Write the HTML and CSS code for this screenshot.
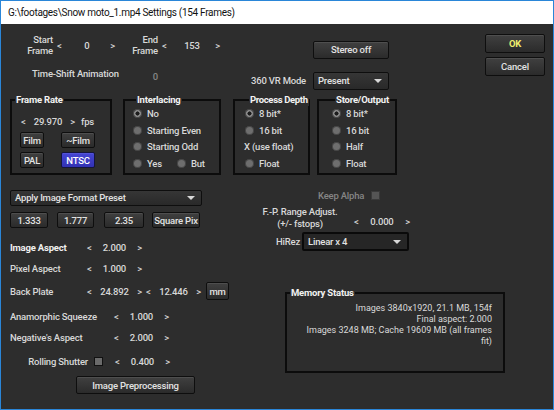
FILE: index.html
```html
<!DOCTYPE html>
<html lang="en">
<head>
    <meta charset="UTF-8">
    <title>Snow moto_1.mp4 Settings</title>
    <link rel="stylesheet" href="styles.css">
</head>
<body>
<div class="win">
    <div class="titlebar">G:\footages\Snow moto_1.mp4 Settings (154 Frames)</div>
    <div class="content">

        <!-- frame range, stereo, ok/cancel -->
        <div class="top">
            <div class="frames">
                <div class="frame-row">
                    <div class="lbl2">Start<br>Frame</div>
                    <div class="spin w-frame"><span>&lt;</span><span>0</span><span>&gt;</span></div>
                    <div class="lbl2">End<br>Frame</div>
                    <div class="spin w-frame"><span>&lt;</span><span>153</span><span>&gt;</span></div>
                </div>
                <div class="timeshift">
                    <span>Time-Shift Animation</span>
                    <span class="dim shift-val">0</span>
                </div>
            </div>
            <div class="vr">
                <span></span>
                <button class="btn">Stereo off</button>
                <span class="vr-lbl">360 VR Mode</span>
                <div class="drop">Present</div>
            </div>
            <div class="actions">
                <button class="btn ok">OK</button>
                <button class="btn">Cancel</button>
            </div>
        </div>

        <!-- group boxes -->
        <div class="groups">
            <fieldset class="grp grp-rate">
                <legend>Frame Rate</legend>
                <div class="fps-row">
                    <div class="spin w-fps"><span>&lt;</span><span>29.970</span><span>&gt;</span></div>
                    <span class="fps">fps</span>
                </div>
                <div class="rate-btns">
                    <button class="btn">Film</button>
                    <button class="btn">~Film</button>
                    <button class="btn">PAL</button>
                    <button class="btn ntsc">NTSC</button>
                </div>
            </fieldset>
            <fieldset class="grp grp-inter">
                <legend>Interlacing</legend>
                <div class="opt"><i class="radio on"></i>No</div>
                <div class="opt"><i class="radio"></i>Starting Even</div>
                <div class="opt"><i class="radio"></i>Starting Odd</div>
                <div class="opt"><i class="radio"></i>Yes<i class="radio but"></i>But</div>
            </fieldset>
            <fieldset class="grp grp-depth">
                <legend>Process Depth</legend>
                <div class="opt"><i class="radio on"></i>8 bit*</div>
                <div class="opt"><i class="radio"></i>16 bit</div>
                <div class="opt plain">X (use float)</div>
                <div class="opt"><i class="radio"></i>Float</div>
            </fieldset>
            <fieldset class="grp grp-store">
                <legend>Store/Output</legend>
                <div class="opt"><i class="radio on"></i>8 bit*</div>
                <div class="opt"><i class="radio"></i>16 bit</div>
                <div class="opt"><i class="radio"></i>Half</div>
                <div class="opt"><i class="radio"></i>Float</div>
            </fieldset>
        </div>

        <!-- aspect settings and memory -->
        <div class="lower">
            <div class="aspect">
                <div class="drop preset">Apply Image Format Preset</div>
                <div class="preset-btns">
                    <button class="btn p1">1.333</button>
                    <button class="btn p2">1.777</button>
                    <button class="btn p3">2.35</button>
                    <button class="btn p4">Square Pix</button>
                </div>
                <div class="param r-image">
                    <span class="plbl strong">Image Aspect</span>
                    <div class="spin w-asp"><span>&lt;</span><span>2.000</span><span>&gt;</span></div>
                </div>
                <div class="param r-pixel">
                    <span class="plbl">Pixel Aspect</span>
                    <div class="spin w-asp"><span>&lt;</span><span>1.000</span><span>&gt;</span></div>
                </div>
                <div class="param r-back">
                    <span class="plbl">Back Plate</span>
                    <div class="spin w-asp"><span>&lt;</span><span>24.892</span><span>&gt;</span></div>
                    <div class="spin w-asp2"><span>&lt;</span><span>12.446</span><span>&gt;</span></div>
                    <button class="btn mm">mm</button>
                </div>
                <div class="param r-anam">
                    <span class="plbl wide">Anamorphic Squeeze</span>
                    <div class="spin w-asp"><span>&lt;</span><span>1.000</span><span>&gt;</span></div>
                </div>
                <div class="param r-neg">
                    <span class="plbl wide">Negative's Aspect</span>
                    <div class="spin w-asp"><span>&lt;</span><span>2.000</span><span>&gt;</span></div>
                </div>
                <div class="param r-roll">
                    <span class="plbl roll">Rolling Shutter</span>
                    <i class="check"></i>
                    <div class="spin w-asp roll-spin"><span>&lt;</span><span>0.400</span><span>&gt;</span></div>
                </div>
                <button class="btn prep">Image Preprocessing</button>
            </div>

            <div class="side">
                <div class="alpha"><span class="dim">Keep Alpha</span><i class="check off"></i></div>
                <div class="fp-row">
                    <div class="fp-lbl">F.-P. Range Adjust.<br>(+/- fstops)</div>
                    <div class="spin w-fp"><span>&lt;</span><span>0.000</span><span>&gt;</span></div>
                </div>
                <div class="hirez">
                    <span class="hirez-lbl">HiRez</span>
                    <div class="drop dark">Linear x 4</div>
                </div>
                <fieldset class="grp memory">
                    <legend>Memory Status</legend>
                    <p>Images 3840x1920, 21.1 MB, 154f<br>
                    Final aspect: 2.000<br>
                    Images 3248 MB; Cache 19609 MB (all frames<br>
                    fit)</p>
                </fieldset>
            </div>
        </div>
    </div>
</div>
</body>
</html>
```

FILE: styles.css
```css
/* dialog window */
body {
    margin: 0;
    background: #2d2d2d;
}

.win {
    width: 554px;
    height: 410px;
    box-sizing: border-box;
    border: 1px solid #2a86d8;
    background: #2d2d2d;
    font-family: Roboto, "Liberation Sans", sans-serif;
    font-size: 9.5px;
    font-weight: 500;
    letter-spacing: -0.2px;
    color: #d8d8d8;
    overflow: hidden;
}

.titlebar {
    height: 23px;
    line-height: 23px;
    padding-left: 7px;
    background: #ffffff;
    color: #111;
    font-family: Roboto, "Liberation Sans", sans-serif;
    font-size: 10px;
    font-weight: 400;
    letter-spacing: -0.3px;
}

.content {
    padding: 10px 8px 0 9px;
}

/* shared controls */
.btn {
    display: block;
    margin: 0;
    padding: 0;
    box-sizing: border-box;
    height: 16px;
    border: 1px solid #0e0e0e;
    border-radius: 2px;
    background: linear-gradient(#404040, #2b2b2b);
    box-shadow: inset 0 1px 0 rgba(255, 255, 255, 0.08);
    color: #e2e2e2;
    font: inherit;
    letter-spacing: inherit;
}

.btn.ok {
    color: #eeee6e;
    font-weight: 700;
}

.btn.ntsc {
    background: linear-gradient(#4646d4, #3232b4);
    border-color: #15153d;
    color: #fff;
}

.drop {
    position: relative;
    box-sizing: border-box;
    height: 18px;
    line-height: 16px;
    padding-left: 4px;
    border: 1px solid #0e0e0e;
    border-radius: 2px;
    background: linear-gradient(#363636, #292929);
    color: #e2e2e2;
}

.drop::after {
    content: "";
    position: absolute;
    right: 6px;
    top: 6px;
    border-left: 4px solid transparent;
    border-right: 4px solid transparent;
    border-top: 4px solid #d8d8d8;
}

.spin {
    display: flex;
    justify-content: space-between;
    align-items: center;
}

.dim {
    color: #858585;
}

.radio {
    display: inline-block;
    flex: none;
    width: 9px;
    height: 9px;
    margin-right: 5px;
    border-radius: 50%;
    background: #6e6e6e;
    box-shadow: inset 0 0 0 1px rgba(0, 0, 0, 0.35);
}

.radio.on {
    background: radial-gradient(circle, #1c1c1c 0 1.8px, #8c8c8c 2.3px 3.3px, #6e6e6e 3.6px);
}

.check {
    display: block;
    width: 9px;
    height: 9px;
    box-sizing: border-box;
    border: 1px solid #111;
    background: #6a6a6a;
}

.check.off {
    background: #555;
    border-color: #3a3a3a;
}

/* top row */
.top {
    display: flex;
    height: 60px;
}

.frames {
    width: 240px;
}

.frame-row {
    display: flex;
    align-items: center;
    height: 22px;
}

.lbl2 {
    width: 43px;
    text-align: right;
    line-height: 11px;
}

.w-frame {
    width: 58px;
    margin-left: 4px;
}

.w-frame span:nth-child(2) {
    margin-left: 2px;
}

.timeshift {
    display: flex;
    margin-top: 12px;
    padding-left: 22px;
    line-height: 12px;
}

.shift-val {
    margin: 3px 0 0 34px;
}

.vr {
    display: grid;
    grid-template-columns: 56px 76px;
    column-gap: 7px;
    row-gap: 4px;
    margin-top: 2px;
    align-items: center;
}

.vr .btn {
    height: 18px;
}

.vr-lbl {
    text-align: right;
    white-space: nowrap;
}

.actions {
    display: flex;
    flex-direction: column;
    gap: 4px;
    margin-left: auto;
}

.actions .btn {
    width: 60px;
    height: 19px;
}

/* group boxes */
.groups {
    display: flex;
}

.grp {
    margin: 0;
    padding: 0;
    min-width: 0;
    box-sizing: border-box;
    height: 81px;
    border: 2px solid #0c0c0c;
}

.grp legend {
    margin-left: 3px;
    padding: 0 1px;
    line-height: 12px;
    white-space: nowrap;
    color: #f2f2f2;
    font-weight: 700;
}

.grp-rate {
    width: 102px;
}

.grp-inter {
    width: 98px;
    margin-left: 11px;
    padding-left: 8px;
}

.grp-depth {
    width: 77px;
    margin-left: 12px;
    padding-left: 10px;
}

.grp-depth legend {
    margin-left: 4px;
    letter-spacing: -0.35px;
}

.grp-store {
    width: 80px;
    margin-left: 7px;
    padding-left: 13px;
}

.opt {
    display: flex;
    align-items: center;
    height: 16.7px;
    white-space: nowrap;
}

.opt:first-of-type {
    margin-top: -1px;
}

.opt.plain {
    margin-left: -1px;
}

.radio.but {
    margin-left: 15px;
}

.fps-row {
    display: flex;
    align-items: center;
    margin: 9px 0 0 9px;
    height: 12px;
}

.w-fps {
    width: 54px;
}

.fps {
    margin-left: 6px;
}

.rate-btns {
    display: grid;
    grid-template-columns: 24px 34px;
    column-gap: 17px;
    row-gap: 4px;
    margin: 5px 0 0 8px;
}

/* lower area */
.lower {
    display: flex;
    margin-top: 15px;
}

.aspect {
    width: 240px;
}

.preset {
    width: 192px;
    height: 16px;
    line-height: 14px;
}

.preset::after {
    top: 5px;
}

.preset-btns {
    display: flex;
    margin-top: 6px;
}

.p1 { width: 38px; }
.p2 { width: 37px; margin-left: 9px; }
.p3 { width: 40px; margin-left: 10px; }
.p4 { width: 48px; margin-left: 8px; }

.param {
    display: flex;
    align-items: center;
    height: 20px;
}

.r-image { margin-top: 9px; }
.r-pixel { margin-top: 1px; }
.r-back { margin-top: 3px; }
.r-anam { margin-top: 5px; }
.r-neg { margin-top: 1px; }
.r-roll { margin-top: 4px; }

.plbl {
    width: 77px;
    white-space: nowrap;
}

.plbl.strong {
    color: #f0f0f0;
    font-weight: 700;
}

.plbl.wide {
    width: 104px;
}

.plbl.roll {
    width: 78px;
    text-align: right;
}

.w-asp {
    width: 55px;
}

.w-asp2 {
    width: 55px;
    margin-left: 4px;
}

.roll-spin {
    margin-left: 12px;
}

.r-roll .check {
    margin-left: 6px;
}

.mm {
    width: 23px;
    height: 18px;
    margin-left: 5px;
}

.prep {
    width: 119px;
    height: 18px;
    margin: 5px 0 0 66px;
}

/* right side */
.side {
    flex: 1;
}

.alpha {
    display: flex;
    align-items: center;
    height: 10px;
    padding-left: 68px;
}

.alpha .check {
    margin-left: 7px;
}

.fp-row {
    display: flex;
    margin-top: 6px;
}

.fp-lbl {
    width: 80px;
    margin-left: 10px;
    text-align: center;
    line-height: 12px;
}

.w-fp {
    width: 56px;
    margin: 10px 0 0 14px;
    align-self: flex-start;
}

.hirez {
    display: flex;
    align-items: center;
    margin-top: 2px;
}

.hirez-lbl {
    width: 50px;
    text-align: right;
}

.drop.dark {
    width: 107px;
    height: 19px;
    margin-left: 2px;
    border: 2px solid #0a0a0a;
    background: #262626;
    line-height: 15px;
}

.memory {
    width: 220px;
    height: 86px;
    margin: 36px 0 0 35px;
}

.memory p {
    margin: 4px 11px 0 0;
    text-align: right;
    font-size: 9px;
    font-weight: 400;
    letter-spacing: 0;
    line-height: 11px;
    color: #dadada;
}
```
